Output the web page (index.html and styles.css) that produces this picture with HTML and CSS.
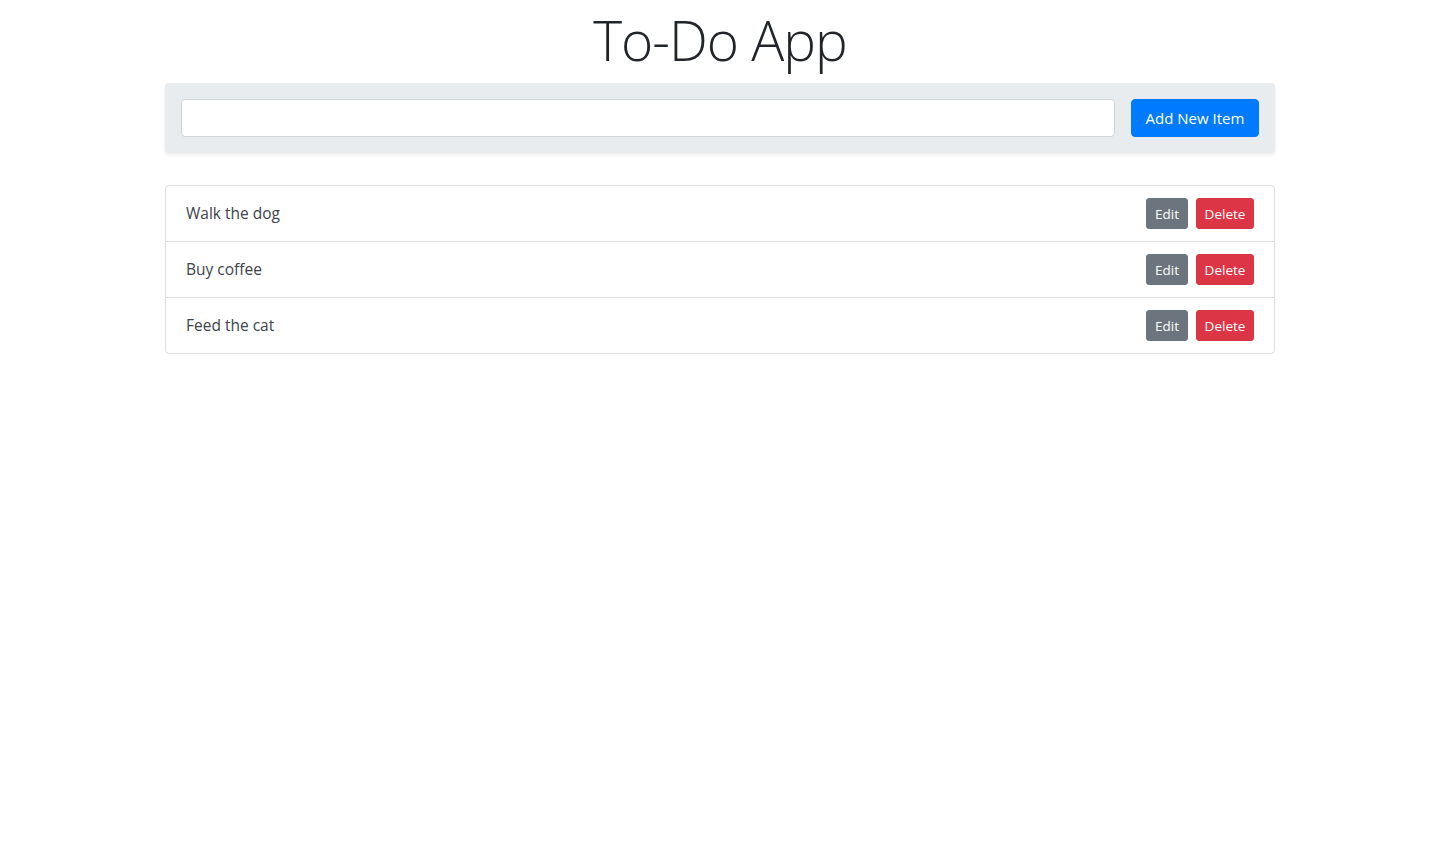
FILE: index.html
```html
<!DOCTYPE html>
<html>
<head>
<meta charset="utf-8">
<title>To-Do App</title>
<link rel="stylesheet" href="styles.css">
</head>
<body>
<div class="container">
  <h1 class="title">To-Do App</h1>
  <div class="add-bar">
    <input class="text-input" type="text">
    <button class="btn btn-primary">Add New Item</button>
  </div>
  <ul class="list">
    <li class="item"><span class="item-text">Walk the dog</span><span class="actions"><button class="btn btn-sm btn-secondary">Edit</button><button class="btn btn-sm btn-danger">Delete</button></span></li>
    <li class="item"><span class="item-text">Buy coffee</span><span class="actions"><button class="btn btn-sm btn-secondary">Edit</button><button class="btn btn-sm btn-danger">Delete</button></span></li>
    <li class="item"><span class="item-text">Feed the cat</span><span class="actions"><button class="btn btn-sm btn-secondary">Edit</button><button class="btn btn-sm btn-danger">Delete</button></span></li>
  </ul>
</div>
</body>
</html>
```

FILE: styles.css
```css
* { box-sizing: border-box; }
html, body { margin: 0; padding: 0; background: #fff; }
body {
  font-family: "Open Sans", "Noto Sans", "Liberation Sans", sans-serif;
  font-size: 16px;
  line-height: 1.5;
  color: #212529;
}
.container {
  width: 1140px;
  margin: 0 auto;
  padding: 0 15px;
}
.title {
  margin: 0 0 3px;
  font-size: 55px;
  font-weight: 300;
  line-height: 80px;
  text-align: center;
  color: #212529;
  letter-spacing: -1px;
}
.add-bar {
  display: flex;
  gap: 16px;
  padding: 16px;
  background: #e9ecef;
  border-radius: 4px;
  box-shadow: 0 2px 4px rgba(0,0,0,0.075);
  margin-bottom: 32px;
}
.text-input {
  flex: 1;
  height: 38px;
  border: 1px solid #ced4da;
  border-radius: 4px;
  background: #fff;
  font: inherit;
  padding: 6px 12px;
}
.btn {
  font-family: inherit;
  border: 1px solid transparent;
  border-radius: 4px;
  color: #fff;
  cursor: pointer;
}
.btn-primary {
  background: #007bff;
  border-color: #007bff;
  height: 38px;
  width: 128px;
  padding: 0;
  font-size: 15px;
}
.list {
  list-style: none;
  margin: 0;
  padding: 0;
  border: 1px solid rgba(0,0,0,0.125);
  border-radius: 4px;
}
.item {
  display: flex;
  align-items: center;
  justify-content: space-between;
  height: 56px;
  padding: 0 20px;
  border-bottom: 1px solid rgba(0,0,0,0.125);
  color: #3d4349;
  font-size: 15.5px;
}
.item:last-child { border-bottom: none; height: 55px; }
.actions { display: flex; gap: 8px; }
.btn-sm {
  height: 31px;
  padding: 0 8px;
  font-size: 13.5px;
  border-radius: 3px;
}
.btn-danger { width: 58px; padding: 0; }
.btn-secondary { background: #6c757d; border-color: #6c757d; }
.btn-danger { background: #dc3545; border-color: #dc3545; }
```
